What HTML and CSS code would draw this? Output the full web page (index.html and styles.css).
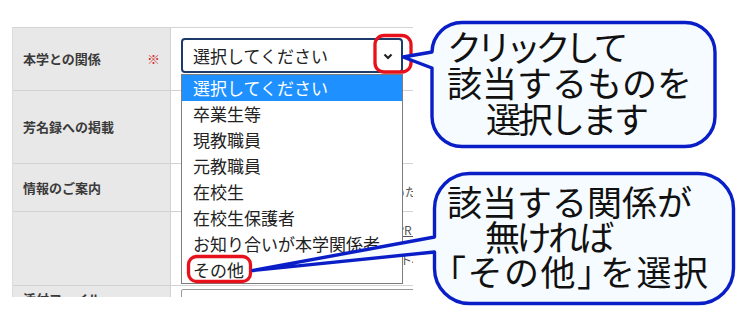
FILE: index.html
```html
<!DOCTYPE html>
<html lang="ja">
<head>
<meta charset="utf-8">
<title>本学との関係 選択</title>
<link rel="stylesheet" href="styles.css">
</head>
<body>
<div class="stage">
  <div class="form">
    <div class="row r1">
      <div class="th"><span>本学との関係</span><span class="req">※</span></div>
      <div class="td">
        <div class="select">
          <span>選択してください</span>
          <svg class="chev" width="10" height="7" viewBox="0 0 10 7"><path d="M1.5 1.5 L5 5 L8.5 1.5" fill="none" stroke="#222" stroke-width="2.2"/></svg>
        </div>
      </div>
    </div>
    <div class="row r2">
      <div class="th"><span>芳名録への掲載</span></div>
      <div class="td"></div>
    </div>
    <div class="row r3">
      <div class="th"><span>情報のご案内</span></div>
      <div class="td"><p class="note n3">本学のお知らせやイベント情報をまとめたご案内をお送りします</p></div>
    </div>
    <div class="row r4">
      <div class="th"></div>
      <div class="td">
        <p class="note link">芳名録への掲載については本学の広報誌PR Infoをご覧ください</p>
        <p class="note second">掲載希望の方は、申込書のチェックリスト4をご確認ください</p>
      </div>
    </div>
    <div class="row r5">
      <div class="th top"><span>添付ファイル</span></div>
      <div class="td"><div class="input"></div></div>
    </div>
  </div>

  <ul class="dropdown">
    <li class="active">選択してください</li>
    <li>卒業生等</li>
    <li>現教職員</li>
    <li>元教職員</li>
    <li>在校生</li>
    <li>在校生保護者</li>
    <li>お知り合いが本学関係者</li>
    <li>その他</li>
  </ul>

  <svg class="annot" width="741" height="312" viewBox="0 0 741 312">
    <rect class="redbox" x="375" y="35.5" width="36" height="36.5" rx="9"/>
    <rect class="redbox" x="188.5" y="256.5" width="62" height="25" rx="8"/>
    <path class="bubble" d="M463 22.5 H685 A30 30 0 0 1 715 52.5 V116.5 A30 30 0 0 1 685 146.5 H462 A30 30 0 0 1 432 116.5 V68 L403 57 L432 52 A30 30 0 0 1 463 22.5 Z"/>
    <path class="bubble" d="M469.5 173.5 H698.5 A35 35 0 0 1 733.5 208.5 V268.5 A35 35 0 0 1 698.5 303.5 H469.5 A35 35 0 0 1 434.5 268.5 V252 L253 270.5 L434.5 237 V208.5 A35 35 0 0 1 469.5 173.5 Z"/>
  </svg>

  <div class="callout c1">
    <div class="ln l1">クリックして</div>
    <div class="ln l2">該当するものを</div>
    <div class="ln l3">選択します</div>
  </div>
  <div class="callout c2">
    <div class="ln m1">該当する関係が</div>
    <div class="ln m2">無ければ</div>
    <div class="ln m3">「その他<span class="br">」</span>を選択</div>
  </div>
</div>
</body>
</html>
```

FILE: styles.css
```css
html, body {
  margin: 0;
  padding: 0;
  background: #fff;
}

body {
  font-family: "Noto Sans CJK JP", "Noto Sans", sans-serif;
  color: #222;
}

.stage {
  position: relative;
  width: 741px;
  height: 312px;
  overflow: hidden;
  padding: 27px 0 0 12px;
  box-sizing: border-box;
}

.form {
  width: 401px;
  height: 270px;
  overflow: hidden;
  border-top: 1px solid #d4d4d4;
  border-left: 1px solid #dcdcdc;
  box-sizing: border-box;
}

.row {
  display: grid;
  grid-template-columns: 158px 1fr;
  border-bottom: 1px solid #d2d2d2;
}

.r1 { height: 62px; }
.r2 { height: 72px; }
.r3 { height: 47px; }
.r4 { height: 73px; }
.r5 { height: 60px; border-bottom: none; }

.th {
  background: #e8e8e8;
  border-right: 1px solid #d2d2d2;
  display: flex;
  align-items: center;
  justify-content: space-between;
  padding: 0 10px 0 10px;
  font-size: 13px;
  font-weight: bold;
  color: #3a3a3a;
  line-height: 16px;
}

.th.top {
  align-items: flex-start;
  padding-top: 5px;
}

.req {
  color: #d0312d;
  font-weight: normal;
}

.td {
  padding: 10px 10px 0 10px;
  min-width: 0;
  overflow: hidden;
}

.select {
  width: 222px;
  height: 35px;
  box-sizing: border-box;
  border: 2px solid #1d3b6a;
  border-radius: 4px;
  display: flex;
  align-items: center;
  justify-content: space-between;
  padding: 0 8px 0 10px;
  font-size: 17px;
  color: #222;
  background: #fff;
}

.chev {
  display: block;
  margin-top: 1px;
}

.note {
  margin: 0;
  font-size: 12px;
  line-height: 16px;
  color: #555;
  white-space: nowrap;
}

.n3 { padding-left: 8px; }

.r3 .td { padding-top: 20px; }
.r4 .td { padding-top: 9px; }
.r5 .td { padding-top: 3px; }

.link {
  text-decoration: underline;
  line-height: 18px;
}

.second {
  margin-top: 13px;
  padding-left: 3px;
}

.input {
  width: 320px;
  height: 30px;
  border: 1px solid #9a9a9a;
  border-radius: 2px;
}

.dropdown {
  position: absolute;
  left: 181px;
  top: 74px;
  width: 222px;
  margin: 0;
  padding: 0;
  list-style: none;
  box-sizing: border-box;
  border: 1px solid #7d7d7d;
  background: #fff;
  font-size: 17px;
  color: #222;
}

.dropdown li {
  height: 26px;
  line-height: 26px;
  padding-left: 11px;
  white-space: nowrap;
}

.dropdown li.active {
  background: #1e90ff;
  color: #fff;
}

.annot {
  position: absolute;
  left: 0;
  top: 0;
  pointer-events: none;
}

.redbox {
  fill: none;
  stroke: #e8101a;
  stroke-width: 3.3;
}

.bubble {
  fill: #f5fbfe;
  stroke: #0a1ec8;
  stroke-width: 3.4;
  stroke-linejoin: round;
}

.callout {
  position: absolute;
  left: 447px;
  font-size: 35px;
  color: #111;
  white-space: nowrap;
}

.c1 {
  top: 28px;
  line-height: 36px;
}

.c2 {
  top: 183px;
  line-height: 35px;
}

.l1 { letter-spacing: -5.5px; }
.l2 { letter-spacing: 0; }
.l3 { margin-left: 39px; letter-spacing: -3px; }

.m1 { letter-spacing: 0; }
.m2 { margin-left: 38px; letter-spacing: -3.5px; }
.m3 { margin-left: -16px; letter-spacing: 1.5px; }
.m3 .br { letter-spacing: -12px; }
```
